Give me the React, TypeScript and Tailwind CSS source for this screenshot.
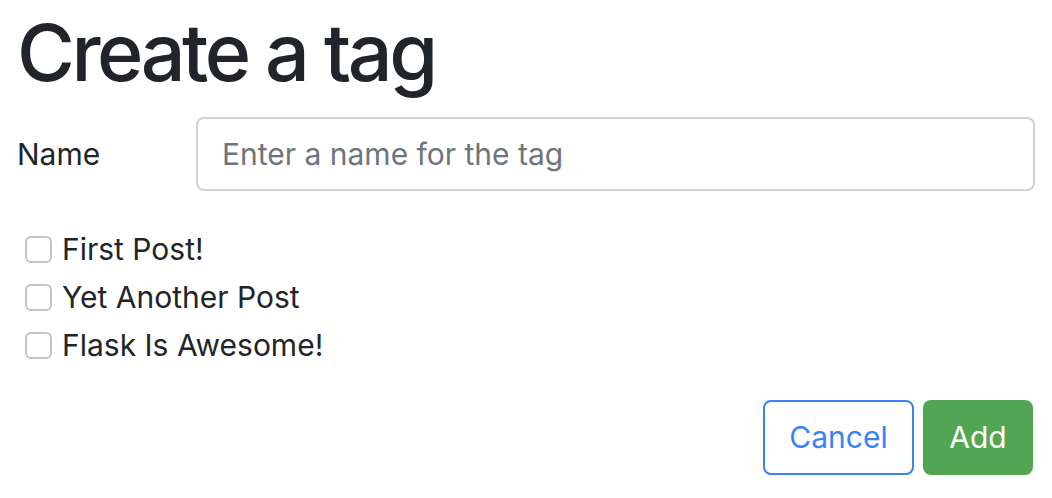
import React from 'react';

const posts = ['First Post!', 'Yet Another Post', 'Flask Is Awesome!'];

export default function App() {
  return (
    <div className="w-[1052px] h-[498px] bg-white text-[#212529] px-[17px] font-['Inter',sans-serif]">
      <h1 className="text-[79px] leading-[96px] font-medium pt-[4px] tracking-[-3.5px]">Create a tag</h1>

      <div className="flex items-center mt-[17px]">
        <label className="w-[179px] text-[30px]">Name</label>
        <input
          type="text"
          placeholder="Enter a name for the tag"
          className="flex-1 h-[74px] border-2 border-[#ced4da] rounded-[8px] px-[24px] text-[30px] placeholder:text-[#6c757d] outline-none"
        />
      </div>

      <div className="mt-[34px] flex flex-col">
        {posts.map((p) => (
          <label key={p} className="flex items-center h-[48px] text-[30px]">
            <span className="ml-[8px] w-[27px] h-[27px] border-2 border-[#c4c4c4] rounded-[6px] bg-white"></span>
            <span className="ml-[10px]">{p}</span>
          </label>
        ))}
      </div>

      <div className="flex justify-end gap-[9px] mt-[31px] pr-[2px]">
        <button className="w-[151px] h-[75px] border-2 border-[#3b82f6] rounded-[8px] text-[#3b82f6] text-[30px]">Cancel</button>
        <button className="w-[110px] h-[75px] rounded-[8px] bg-[#52a552] text-white text-[30px]">Add</button>
      </div>
    </div>
  );
}
